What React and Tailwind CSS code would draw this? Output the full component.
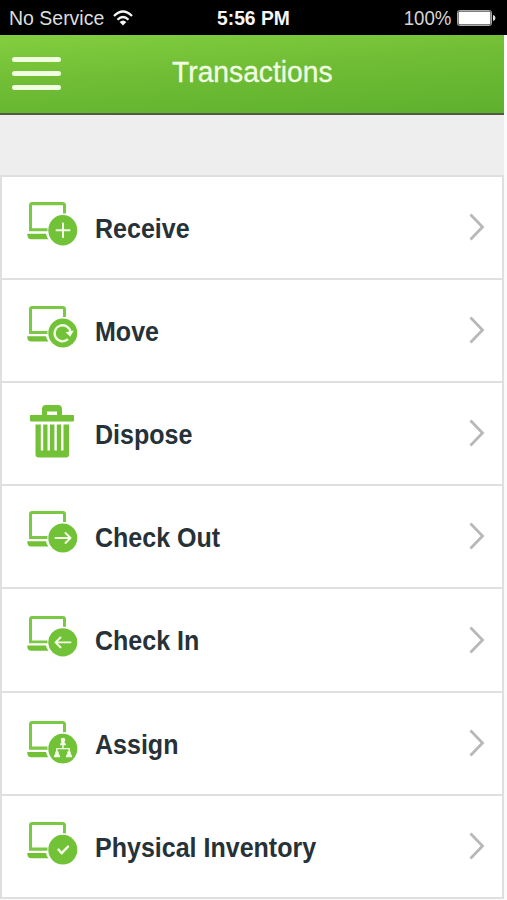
const transactions = [
  { label: 'Receive', badge: 'plus', row: 'h-[103px]', icon: 'mt-[25px] h-[44px]' },
  { label: 'Move', badge: 'refresh', row: 'h-[103px]', icon: 'mt-[26px] h-[42px]' },
  { label: 'Dispose', badge: 'trash', row: 'h-[103px]', icon: 'mt-[21px] h-[54px]' },
  { label: 'Check Out', badge: 'right', row: 'h-[103px]', icon: 'mt-[25px] h-[42px]' },
  { label: 'Check In', badge: 'left', row: 'h-[104px]', icon: 'mt-[27px] h-[41px]' },
  { label: 'Assign', badge: 'people', row: 'h-[103px]', icon: 'mt-[28px] h-[43px]' },
  { label: 'Physical Inventory', badge: 'check', row: 'h-[103px]', icon: 'mt-[26px] h-[43px]' },
]

function BadgeSymbol({ type }) {
  const line = { fill: 'none', stroke: '#f4ffe9', strokeWidth: 2, strokeLinecap: 'round', strokeLinejoin: 'round' }

  if (type === 'plus') return <path d="M36 20.5v13M29.5 27h13" {...line} />
  if (type === 'right') return <path d="M28.5 27h15M38.5 22l5 5-5 5" {...line} />
  if (type === 'left') return <path d="M43.5 27h-15M33.5 22l-5 5 5 5" {...line} />
  if (type === 'check') return <path d="M31.5 27l3.2 3.5 6.3-6.5" {...line} strokeWidth={2.4} />
  if (type === 'refresh') {
    return (
      <>
        <path d="M41 33.2a8 8 0 1 1 2.5-7" {...line} strokeWidth={2.3} strokeLinecap="butt" />
        <path d="M38.5 26.3l8.2-1.8-3.4 6.3z" fill="#f4ffe9" />
      </>
    )
  }

  return (
    <>
      <path d="M36 21v6M29.8 32v-5h12.4v5" {...line} strokeWidth={1.4} />
      <g fill="#f4ffe9">
        <circle cx="36" cy="18.6" r="2.3" />
        <path d="M33 23.6c0-4.6 6-4.6 6 0z" />
        <circle cx="30" cy="31.2" r="1.9" />
        <path d="M26.8 35.4c0-4.8 6.4-4.8 6.4 0z" />
        <circle cx="42" cy="31.2" r="1.9" />
        <path d="M38.8 35.4c0-4.8 6.4-4.8 6.4 0z" />
      </g>
    </>
  )
}

function LaptopIcon({ type, className }) {
  return (
    <svg viewBox="0 0 52 42" preserveAspectRatio="none" className={`w-[52px] ${className}`}>
      <path d="M37.5 11V3.2Q37.5 1.5 35.8 1.5H5.2Q3.5 1.5 3.5 3.2V26.5H20.5" fill="none" stroke="#7bc843" strokeWidth="3" />
      <path d="M0.3 30.3H19Q19.5 33.5 21.5 35.5H4Q0.7 35.5 0.3 31.5z" fill="#72c137" />
      <circle cx="35.8" cy="27" r="14.5" fill="#72c238" />
      <BadgeSymbol type={type} />
    </svg>
  )
}

function TrashIcon({ className }) {
  return (
    <svg viewBox="0 0 52 54" preserveAspectRatio="none" className={`w-[52px] ${className}`}>
      <g fill="#72c137">
        <path fillRule="evenodd" d="M3.5 11H15V5Q15 1 19 1H31Q35 1 35 5V11H46.5Q47 11 47 12V16.5Q47 17.5 46 17.5H4Q3 17.5 3 16.5V12Q3 11 3.5 11zM20 7.5V11H30V7.5z" />
        <path fillRule="evenodd" d="M8.5 20.5H42V50.5Q42 53.5 39 53.5H11.5Q8.5 53.5 8.5 50.5zM13.8 20.5V46.5H16.2V20.5zM20.5 20.5V46.5H22.9V20.5zM27.4 20.5V46.5H29.8V20.5zM34.1 20.5V46.5H36.5V20.5z" />
      </g>
    </svg>
  )
}

function TransactionRow({ item }) {
  return (
    <li className={`flex items-center border-b-2 border-[#dfdfdf] pl-[25px] pr-[17px] ${item.row}`}>
      <div className="flex h-full items-start">
        {item.badge === 'trash' ? <TrashIcon className={item.icon} /> : <LaptopIcon type={item.badge} className={item.icon} />}
      </div>
      <span className="ml-[16px] mt-[2px] flex-1 origin-left scale-x-[0.91] whitespace-nowrap text-[27.5px] font-bold leading-none text-[#263238]">{item.label}</span>
      <svg viewBox="0 0 16 28" className="-mt-px h-7 w-4 shrink-0" fill="none" stroke="#b8b8b8" strokeWidth="2.8">
        <path d="M1.5 1.5L13.5 14L1.5 26.5" />
      </svg>
    </li>
  )
}

function StatusBar() {
  return (
    <div className="grid h-[35px] grid-cols-[1fr_auto_1fr] items-center bg-black pb-px pl-[9px] pr-[11px] pt-[3px] text-[20.5px] leading-none">
      <div className="flex items-center text-[#dedede]">
        <span className="w-[104px] origin-left scale-x-[0.95] whitespace-nowrap">No Service</span>
        <svg viewBox="0 0 20 16" className="h-4 w-5 -translate-y-px" fill="none" stroke="#f5f5f5" strokeWidth="2.3">
          <path d="M1 6Q10-3 19 6M4.5 9.8Q10 4.2 15.5 9.8" />
          <path d="M10 15.5L6.6 12Q10 9 13.4 12z" fill="#f5f5f5" stroke="none" />
        </svg>
      </div>
      <span className="ml-[3px] w-[75px] origin-left scale-x-[0.94] whitespace-nowrap font-bold text-[#f5f5f5]">5:56 PM</span>
      <div className="flex items-center justify-end text-[#d5d5d5]">
        <span className="origin-right scale-x-[0.91]">100%</span>
        <svg viewBox="0 0 39 16" className="ml-[6px] h-4 w-[39px] -translate-y-px">
          <rect x="0.5" y="0.5" width="34" height="15" rx="2" fill="none" stroke="#aaa" />
          <rect x="1.5" y="1.5" width="32" height="13" rx="1" fill="#fff" />
          <path d="M36 5Q38.5 5.5 38.5 8T36 11z" fill="#ddd" />
        </svg>
      </div>
    </div>
  )
}

function Header() {
  return (
    <header className="mr-[3px] grid h-[80px] grid-cols-[1fr_auto_1fr] items-center border-b-2 border-[#4f5b45] bg-[linear-gradient(176deg,#83ce40_0%,#70bd35_45%,#5eb02d_100%)] px-[12px]">
      <div className="-mt-[2px] flex w-[49px] flex-col gap-[9px]">
        <span className="h-[5px] rounded-full bg-[#efffe0]" />
        <span className="h-[5px] rounded-full bg-[#efffe0]" />
        <span className="h-[5px] rounded-full bg-[#efffe0]" />
      </div>
      <h1 className="-mt-[5px] scale-x-[0.94] text-[30px] leading-none text-[#f1ffe5] [-webkit-text-stroke:0.3px_#f1ffe5]">Transactions</h1>
    </header>
  )
}

function App() {
  return (
    <main className="h-[900px] w-[507px] overflow-hidden bg-[#fbfbfb] font-['Liberation_Sans',Arial,sans-serif]">
      <StatusBar />
      <Header />
      <div className="mr-[3px] h-[60px] bg-[#eeeeee]" />
      <ul className="mr-[3px] border-x-2 border-t-2 border-[#dfdfdf] bg-white">
        {transactions.map((item) => <TransactionRow key={item.label} item={item} />)}
      </ul>
    </main>
  )
}

export default App
